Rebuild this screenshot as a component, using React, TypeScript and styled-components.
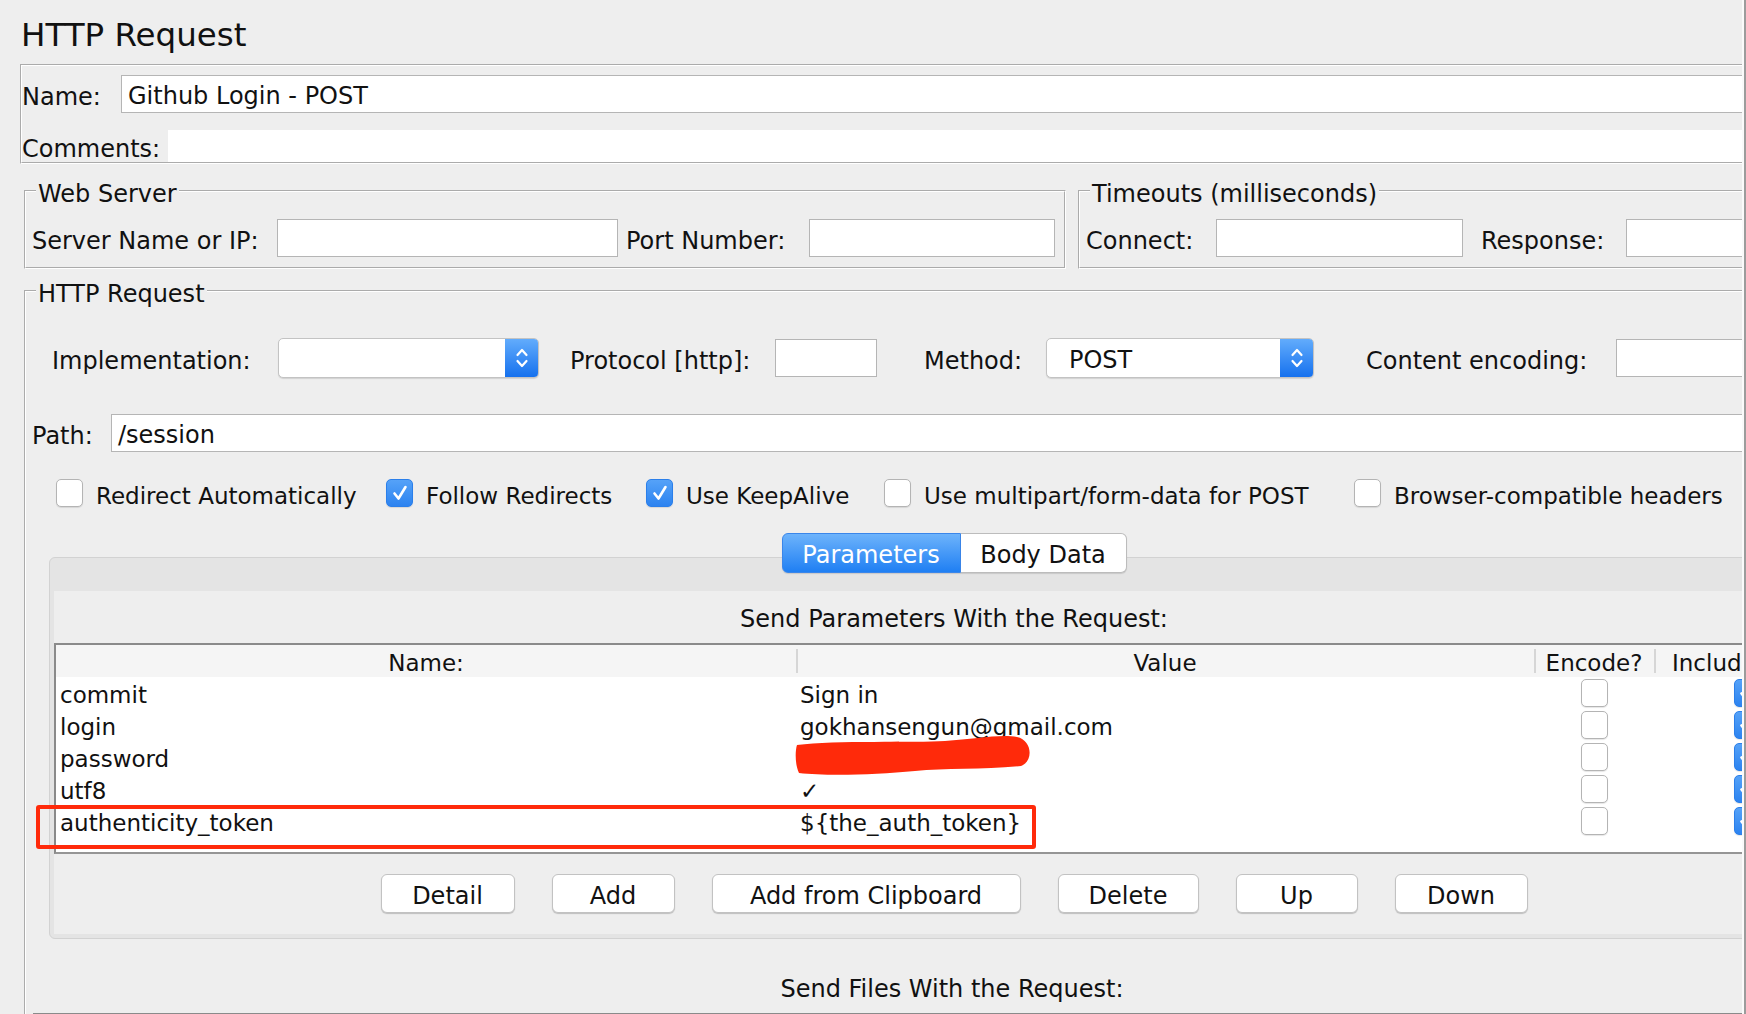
import React from 'react';
import styled, { createGlobalStyle } from 'styled-components';

const GlobalStyle = createGlobalStyle`
  html, body {
    margin: 0;
    padding: 0;
    background: #eeeeee;
  }
  body {
    font-family: "DejaVu Sans", "Open Sans", sans-serif;
    font-size: 24px;
    color: #111;
  }
  * {
    box-sizing: border-box;
  }
`;

const Frame = styled.div`
  display: flex;
  width: 1746px;
  height: 1014px;
  overflow: hidden;
  background: #eeeeee;
`;

const Viewport = styled.div`
  width: 1742px;
  height: 100%;
  overflow: hidden;
`;

const ScrollEdge = styled.div`
  width: 4px;
  height: 100%;
  border-left: 2px solid #fafafa;
  background: #9c9c9c;
`;

const Sheet = styled.div`
  width: 1900px;
  padding-left: 20px;
`;

const Title = styled.div`
  height: 64px;
  padding: 6px 0 0 1px;
  font-size: 32.5px;
  line-height: 58px;
`;

const InfoPanel = styled.div`
  border: 2px groove #ffffff;
  padding: 9px 0 0 0;
  height: 100px;
`;

const Row = styled.div<{ $h: number; $mt?: number; $pl?: number }>`
  display: flex;
  align-items: center;
  height: ${({ $h }) => $h}px;
  margin-top: ${({ $mt }) => $mt ?? 0}px;
  padding-left: ${({ $pl }) => $pl ?? 0}px;
`;

const Label = styled.span<{ $w?: number; $ml?: number }>`
  flex: none;
  width: ${({ $w }) => ($w ? `${$w}px` : 'auto')};
  margin-left: ${({ $ml }) => $ml ?? 0}px;
  padding-top: 5px;
  white-space: nowrap;
  font-size: 24px;
  line-height: 30px;
`;

const TextField = styled.div<{ $w?: number }>`
  flex: ${({ $w }) => ($w ? 'none' : '1')};
  width: ${({ $w }) => ($w ? `${$w}px` : 'auto')};
  height: 38px;
  display: flex;
  align-items: center;
  padding: 4px 0 0 6px;
  background: #ffffff;
  border: 1px solid #b5b5b5;
  font-size: 24px;
  white-space: nowrap;
`;

const CommentArea = styled.div`
  flex: 1;
  height: 32px;
  background: #ffffff;
`;

const GroupRow = styled.div`
  display: flex;
  gap: 12px;
  margin: 8px 0 0 4px;
`;

const Group = styled.fieldset<{ $w?: number }>`
  flex: ${({ $w }) => ($w ? 'none' : '1')};
  width: ${({ $w }) => ($w ? `${$w}px` : 'auto')};
  min-width: 0;
  margin: 0;
  padding: 0 6px 10px;
  border: 2px groove #ffffff;
`;

const Legend = styled.legend`
  margin-left: 4px;
  padding: 7px 2px 0;
  font-size: 24px;
  line-height: 30px;
`;

const RequestGroup = styled(Group)`
  margin: 3px 0 0 4px;
  padding-bottom: 0;
  height: 760px;
`;

const SelectBox = styled.div<{ $w: number }>`
  flex: none;
  width: ${({ $w }) => $w}px;
  height: 40px;
  display: flex;
  align-items: stretch;
  background: #ffffff;
  border: 1px solid #c3c3c3;
  border-radius: 5px;
  box-shadow: 0 1px 1px rgba(0, 0, 0, 0.12);
  overflow: hidden;
`;

const SelectValue = styled.span`
  flex: 1;
  display: flex;
  align-items: center;
  padding: 4px 0 0 22px;
  font-size: 24px;
`;

const Stepper = styled.span`
  width: 33px;
  display: flex;
  align-items: center;
  justify-content: center;
  background: linear-gradient(#62acfc, #1671ee);
`;

const CheckRow = styled.div`
  display: flex;
  align-items: center;
  height: 28px;
  margin-top: 27px;
  padding-left: 24px;
`;

const CheckItem = styled.label<{ $w?: number }>`
  flex: none;
  width: ${({ $w }) => ($w ? `${$w}px` : 'auto')};
  display: flex;
  align-items: center;
  gap: 13px;
  white-space: nowrap;
`;

const CheckText = styled.span`
  padding-top: 5px;
  font-size: 23px;
  line-height: 28px;
`;

const Box = styled.span<{ $on?: boolean }>`
  flex: none;
  width: 27px;
  height: 28px;
  display: flex;
  align-items: center;
  justify-content: center;
  border-radius: 5px;
  border: 1px solid ${({ $on }) => ($on ? '#2b7fea' : '#b4b4b4')};
  background: ${({ $on }) => ($on ? 'linear-gradient(#55a2f8, #2c83f0)' : '#ffffff')};
  box-shadow: 0 1px 1px rgba(0, 0, 0, 0.1);
`;

const TabBar = styled.div`
  position: relative;
  z-index: 1;
  display: flex;
  justify-content: center;
  width: 1810px;
  margin: 26px 0 -16px 17px;
`;

const Tab = styled.div<{ $w: number; $active?: boolean }>`
  width: ${({ $w }) => $w}px;
  height: 40px;
  display: flex;
  align-items: center;
  justify-content: center;
  padding-top: 4px;
  font-size: 24px;
  color: ${({ $active }) => ($active ? '#ffffff' : '#111')};
  background: ${({ $active }) => ($active ? 'linear-gradient(#6db3fb, #1f7ff3)' : '#ffffff')};
  border: 1px solid ${({ $active }) => ($active ? '#3a86ea' : '#bcbcbc')};
  border-left-width: ${({ $active }) => ($active ? 1 : 0)}px;
  border-radius: ${({ $active }) => ($active ? '6px 0 0 6px' : '0 6px 6px 0')};
  box-shadow: 0 1px 1px rgba(0, 0, 0, 0.12);
`;

const TabPane = styled.div`
  width: 1810px;
  margin-left: 17px;
  padding: 33px 4px 4px;
  background: #e4e4e4;
  border: 1px solid #d2d2d2;
  border-radius: 6px;
`;

const PaneInner = styled.div`
  background: #eeeeee;
  padding-bottom: 21px;
`;

const Caption = styled.div<{ $h: number; $pt?: number }>`
  height: ${({ $h }) => $h}px;
  display: flex;
  align-items: center;
  justify-content: center;
  padding-top: ${({ $pt }) => $pt ?? 4}px;
  font-size: 24px;
  white-space: nowrap;
`;

const TableWrap = styled.div`
  position: relative;
  height: 211px;
  background: #ffffff;
  border-top: 2px solid #8a8a8a;
  border-bottom: 2px solid #959595;
  border-left: 2px solid #8a8a8a;
`;

const Grid = styled.div`
  display: grid;
  grid-template-columns: 740px 738px 120px 186px 1fr;
`;

const HeadCell = styled.div<{ $left?: boolean; $divider?: boolean }>`
  position: relative;
  height: 32px;
  display: flex;
  align-items: center;
  justify-content: ${({ $left }) => ($left ? 'flex-start' : 'center')};
  padding: 4px 0 0 ${({ $left }) => ($left ? 18 : 0)}px;
  background: #f5f5f5;
  font-size: 23px;
  white-space: nowrap;

  &::before {
    content: '';
    display: ${({ $divider }) => ($divider ? 'block' : 'none')};
    position: absolute;
    left: 0;
    top: 4px;
    bottom: 4px;
    width: 2px;
    background: #d6d6d6;
  }
`;

const Cell = styled.div<{ $center?: boolean }>`
  height: 32px;
  display: flex;
  align-items: center;
  justify-content: ${({ $center }) => ($center ? 'center' : 'flex-start')};
  padding: ${({ $center }) => ($center ? '0' : '4px 0 0 4px')};
  font-size: 23px;
  white-space: nowrap;
`;

const Highlight = styled.div`
  position: absolute;
  left: -20px;
  top: 160px;
  width: 1000px;
  height: 44px;
  border: 4px solid #ff2a0a;
  border-radius: 3px;
  pointer-events: none;
`;

const Scribble = styled.svg`
  position: absolute;
  left: 739px;
  top: 90px;
  pointer-events: none;
`;

const ButtonRow = styled.div`
  display: flex;
  justify-content: center;
  gap: 37px;
  margin-top: 20px;
`;

const Button = styled.button<{ $w: number }>`
  width: ${({ $w }) => $w}px;
  height: 39px;
  padding: 4px 0 0;
  font-family: inherit;
  font-size: 24px;
  color: #111;
  background: #ffffff;
  border: 1px solid #c2c2c2;
  border-radius: 6px;
  box-shadow: 0 1px 1px rgba(0, 0, 0, 0.2);
`;

const FilesBlock = styled.div`
  width: 1838px;
  margin-left: 1px;
`;

const FilesTable = styled.div`
  height: 80px;
  background: #ffffff;
  border-top: 2px solid #8a8a8a;
`;

const Chevrons = () => (
  <svg width="14" height="26" viewBox="0 0 14 26">
    <path d="M2.5 10 L7 5 L11.5 10 M2.5 16 L7 21 L11.5 16" fill="none" stroke="#ffffff" strokeWidth="2.2" strokeLinecap="round" strokeLinejoin="round" />
  </svg>
);

const Tick = () => (
  <svg width="20" height="20" viewBox="0 0 20 20">
    <path d="M4.5 10.5 L8.5 15.5 L15.5 4" fill="none" stroke="#ffffff" strokeWidth="2.6" strokeLinecap="round" strokeLinejoin="round" />
  </svg>
);

const CheckBox: React.FC<{ on?: boolean }> = ({ on }) => <Box $on={on}>{on && <Tick />}</Box>;

const params = [
  { name: 'commit', value: 'Sign in' },
  { name: 'login', value: 'gokhansengun@gmail.com' },
  { name: 'password', value: '' },
  { name: 'utf8', value: '✓' },
  { name: 'authenticity_token', value: '${the_auth_token}' },
];

const buttons = [
  { text: 'Detail', w: 134 },
  { text: 'Add', w: 123 },
  { text: 'Add from Clipboard', w: 309 },
  { text: 'Delete', w: 141 },
  { text: 'Up', w: 122 },
  { text: 'Down', w: 133 },
];

const App: React.FC = () => {
  return (
    <Frame>
      <GlobalStyle />
      <Viewport>
        <Sheet>
          <Title>HTTP Request</Title>

          <InfoPanel>
            <Row $h={38}>
              <Label $w={99}>Name:</Label>
              <TextField>Github Login - POST</TextField>
            </Row>
            <Row $h={32} $mt={17}>
              <Label $w={146}>Comments:</Label>
              <CommentArea />
            </Row>
          </InfoPanel>

          <GroupRow>
            <Group $w={1042}>
              <Legend>Web Server</Legend>
              <Row $h={38} $mt={10}>
                <Label $w={245}>Server Name or IP:</Label>
                <TextField $w={341} />
                <Label $w={183} $ml={8}>Port Number:</Label>
                <TextField $w={246} />
              </Row>
            </Group>
            <Group>
              <Legend>Timeouts (milliseconds)</Legend>
              <Row $h={38} $mt={10}>
                <Label $w={130}>Connect:</Label>
                <TextField $w={247} />
                <Label $w={145} $ml={18}>Response:</Label>
                <TextField />
              </Row>
            </Group>
          </GroupRow>

          <RequestGroup>
            <Legend>HTTP Request</Legend>
            <Row $h={40} $mt={29} $pl={20}>
              <Label $w={226}>Implementation:</Label>
              <SelectBox $w={261}>
                <SelectValue />
                <Stepper><Chevrons /></Stepper>
              </SelectBox>
              <Label $w={205} $ml={31}>Protocol [http]:</Label>
              <TextField $w={102} />
              <Label $w={122} $ml={47}>Method:</Label>
              <SelectBox $w={268}>
                <SelectValue>POST</SelectValue>
                <Stepper><Chevrons /></Stepper>
              </SelectBox>
              <Label $w={250} $ml={52}>Content encoding:</Label>
              <TextField />
            </Row>

            <Row $h={38} $mt={36}>
              <Label $w={79}>Path:</Label>
              <TextField>/session</TextField>
            </Row>

            <CheckRow>
              <CheckItem $w={330}><CheckBox /><CheckText>Redirect Automatically</CheckText></CheckItem>
              <CheckItem $w={260}><CheckBox on /><CheckText>Follow Redirects</CheckText></CheckItem>
              <CheckItem $w={238}><CheckBox on /><CheckText>Use KeepAlive</CheckText></CheckItem>
              <CheckItem $w={470}><CheckBox /><CheckText>Use multipart/form-data for POST</CheckText></CheckItem>
              <CheckItem><CheckBox /><CheckText>Browser-compatible headers</CheckText></CheckItem>
            </CheckRow>

            <TabBar>
              <Tab $w={179} $active>Parameters</Tab>
              <Tab $w={166}>Body Data</Tab>
            </TabBar>
            <TabPane>
              <PaneInner>
                <Caption $h={52}>Send Parameters With the Request:</Caption>
                <TableWrap>
                  <Grid>
                    <HeadCell>Name:</HeadCell>
                    <HeadCell $divider>Value</HeadCell>
                    <HeadCell $divider>Encode?</HeadCell>
                    <HeadCell $divider $left>Include Equals?</HeadCell>
                    <HeadCell />
                    {params.map(p => (
                      <React.Fragment key={p.name}>
                        <Cell>{p.name}</Cell>
                        <Cell>{p.value}</Cell>
                        <Cell $center><CheckBox /></Cell>
                        <Cell $center><CheckBox on /></Cell>
                        <Cell />
                      </React.Fragment>
                    ))}
                  </Grid>
                  <Scribble width="238" height="42" viewBox="0 0 238 42">
                    <path
                      d="M2 10 C 40 5, 120 8, 150 6 C 180 4, 205 -1, 222 2 C 237 5, 239 26, 226 31 C 190 35, 150 33, 120 36 C 80 40, 30 41, 4 38 C 0 30, 0 16, 2 10 Z"
                      fill="#ff2a0a"
                    />
                  </Scribble>
                  <Highlight />
                </TableWrap>
                <ButtonRow>
                  {buttons.map(b => (
                    <Button key={b.text} $w={b.w}>{b.text}</Button>
                  ))}
                </ButtonRow>
              </PaneInner>
            </TabPane>

            <FilesBlock>
              <Caption $h={74} $pt={26}>Send Files With the Request:</Caption>
              <FilesTable />
            </FilesBlock>
          </RequestGroup>
        </Sheet>
      </Viewport>
      <ScrollEdge />
    </Frame>
  );
};

export default App;
